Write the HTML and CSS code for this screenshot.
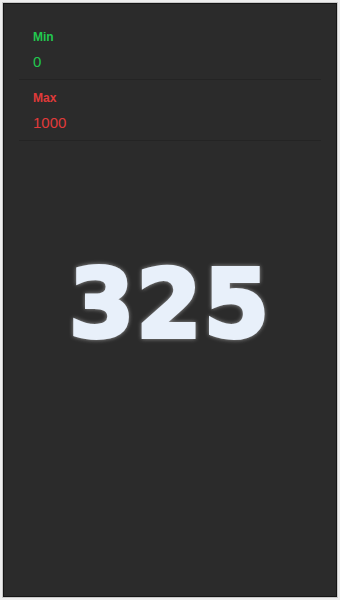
FILE: index.html
```html
<!DOCTYPE html>
<html>
<head>
<meta charset="utf-8">
<link rel="stylesheet" href="styles.css">
</head>
<body>
<div class="frame">
  <div class="list">
    <div class="row">
      <div class="label min">Min</div>
      <div class="value min">0</div>
    </div>
    <div class="row">
      <div class="label max">Max</div>
      <div class="value max">1000</div>
    </div>
  </div>
  <div class="big">325</div>
</div>
</body>
</html>
```
FILE: styles.css
```css
html, body {
  margin: 0;
  padding: 0;
  background: #eeeeee;
}
body {
  padding: 3px 3px 3px 3px;
  font-family: "Liberation Sans", Arial, sans-serif;
}
.frame {
  box-sizing: border-box;
  width: 334px;
  height: 594px;
  background: #2b2b2b;
  border: 1px solid #151515;
  box-shadow: 0 0 0 1px #c8c8c8;
  overflow: hidden;
}
.list {
  margin: 15px 15px 0 15px;
}
.row {
  padding: 10px 14px 7px 14px;
  border-bottom: 1px solid #242424;
}
.label {
  font-size: 12px;
  font-weight: bold;
  line-height: 16px;
}
.value {
  margin-top: 7px;
  font-size: 15px;
  line-height: 20px;
}
.min { color: #22c84f; }
.max { color: #e03a3a; }
.big {
  margin-top: 117px;
  text-align: center;
  font-family: "DejaVu Sans", sans-serif;
  font-weight: bold;
  font-size: 94px;
  letter-spacing: 2px;
  line-height: 1;
  color: #e8f0fa;
  -webkit-text-stroke: 4px #e8f0fa;
  filter: drop-shadow(0 0 2px rgba(160, 160, 160, 0.9));
}
```
